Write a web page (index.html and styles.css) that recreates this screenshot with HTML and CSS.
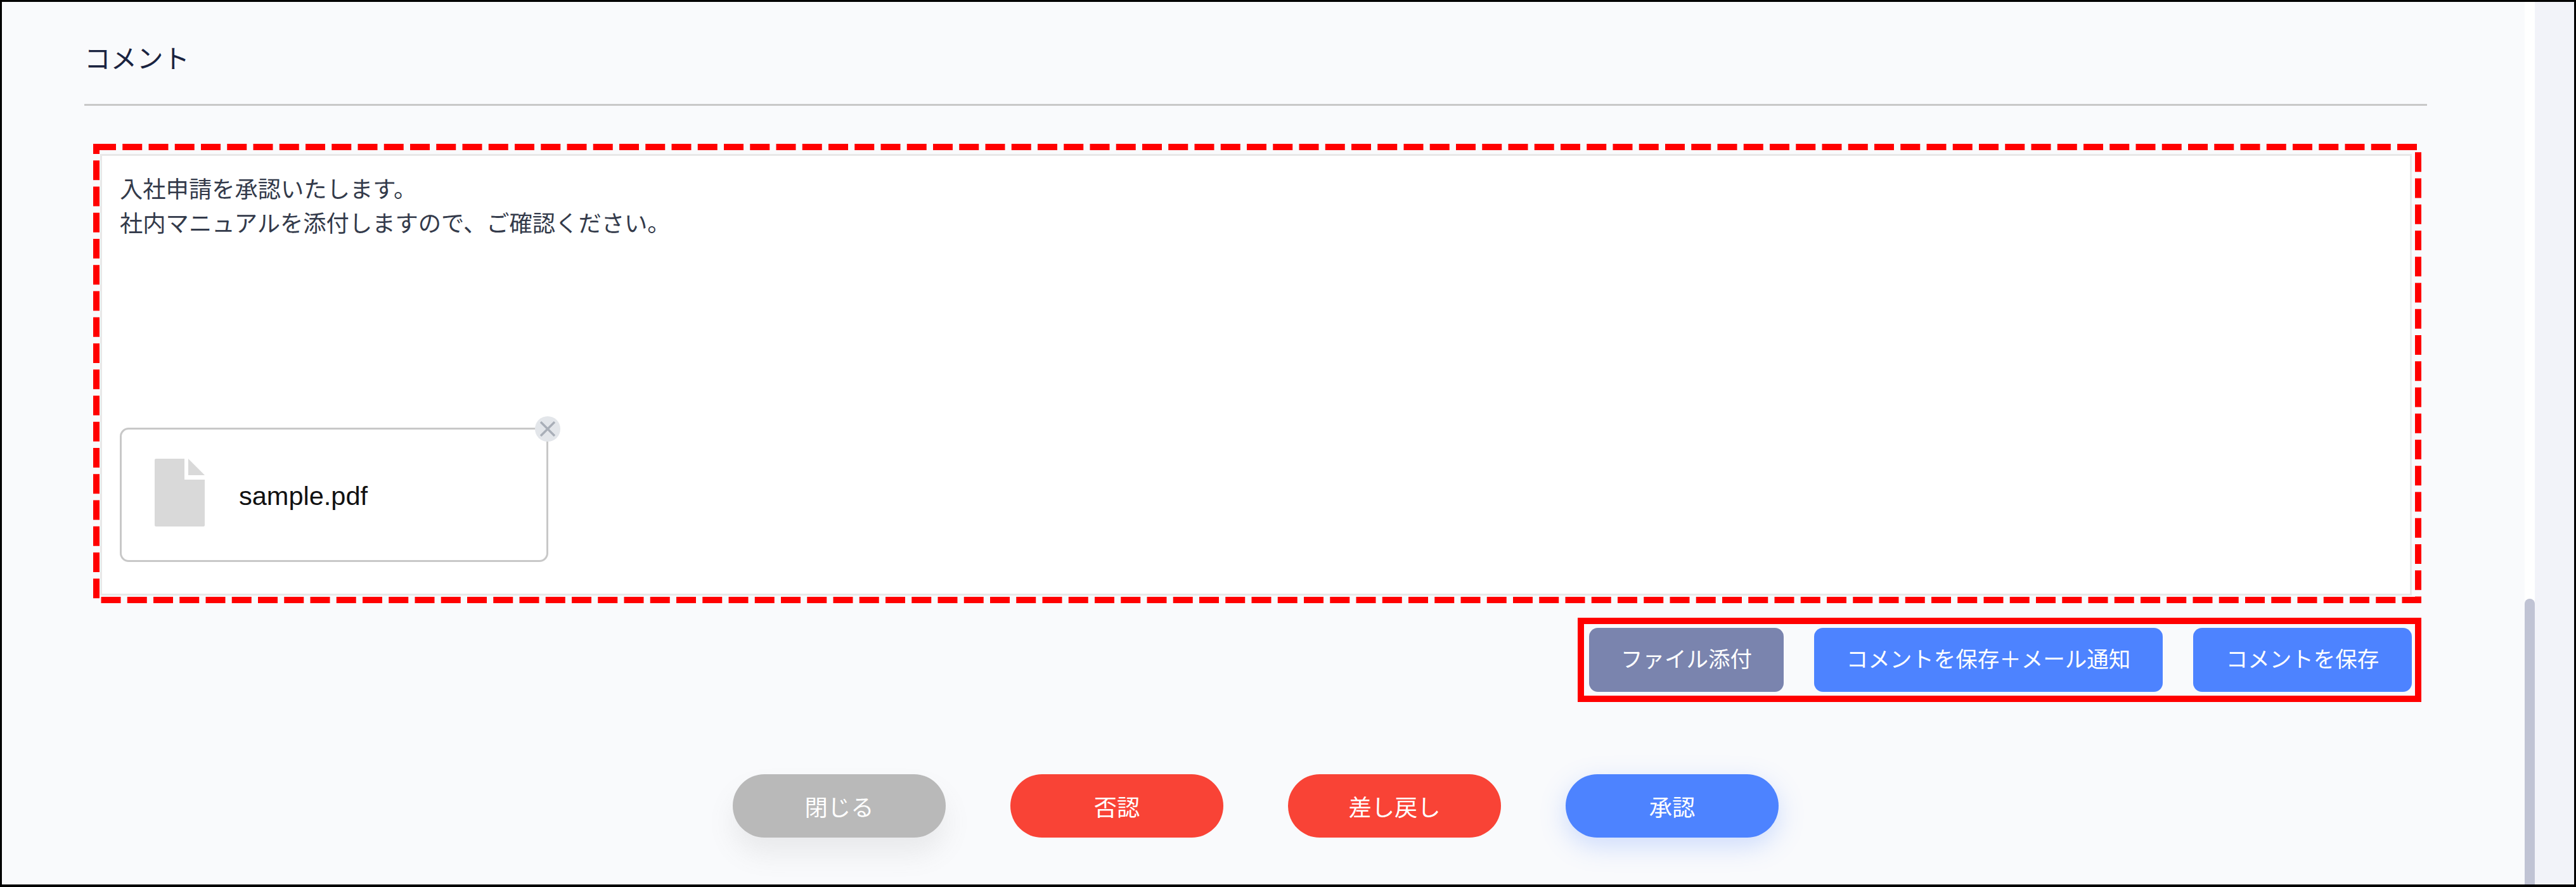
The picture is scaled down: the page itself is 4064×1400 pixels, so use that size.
FILE: index.html
```html
<!DOCTYPE html>
<html lang="ja">
<head>
    <meta charset="UTF-8">
    <title>コメント</title>
    <link rel="stylesheet" href="styles.css">
</head>
<body>
    <div class="frame">
        <main class="content">
            <h2 class="section-title">コメント</h2>

            <div class="comment-area">
                <div class="comment-box">
                    <div class="comment-text">
                        <p>入社申請を承認いたします。</p>
                        <p>社内マニュアルを添付しますので、ご確認ください。</p>
                    </div>
                    <div class="file-card">
                        <svg class="file-icon" viewBox="0 0 79 107">
                            <path d="M2 0H47V33H79V105Q79 107 77 107H2Q0 107 0 105V2Q0 0 2 0Z"/>
                            <path d="M53 0L79 26H53Z"/>
                        </svg>
                        <span class="file-name">sample.pdf</span>
                        <span class="file-remove">
                            <svg viewBox="0 0 24 24"><path d="M1 1L23 23M23 1L1 23"/></svg>
                        </span>
                    </div>
                </div>
                <!-- 赤い破線の注釈 -->
                <svg class="dash-note" viewBox="0 0 3673 725">
                    <rect x="5" y="5" width="3663" height="715"/>
                </svg>
            </div>

            <div class="tool-row">
                <div class="tool-box">
                    <button class="tool-button attach">ファイル添付</button>
                    <button class="tool-button notify">コメントを保存＋メール通知</button>
                    <button class="tool-button save">コメントを保存</button>
                </div>
            </div>

            <div class="actions">
                <button class="action-button close">閉じる</button>
                <button class="action-button reject">否認</button>
                <button class="action-button reject">差し戻し</button>
                <button class="action-button approve">承認</button>
            </div>
        </main>
        <div class="scrollbar">
            <div class="scrollbar-thumb"></div>
        </div>
        <div class="scrollbar-track"></div>
    </div>
</body>
</html>
```

FILE: styles.css
```css
* {
    box-sizing: border-box;
}
html, body {
    margin: 0;
    height: 1400px;
    overflow: hidden;
}
body {
    font-family: "Noto Sans CJK JP", "Liberation Sans", sans-serif;
    font-size: 36.3px;
    color: #333a4a;
}
.frame {
    display: flex;
    height: 1400px;
    border: 3px solid #000000;
    border-bottom-width: 4px;
    background-color: #f9fafc;
}
.content {
    flex: 1;
    padding: 0 154px 0 130px;
}
.section-title {
    margin: 0;
    height: 164px;
    padding-top: 57px;
    font-size: 41.5px;
    font-weight: 400;
    line-height: 60px;
    color: #1a2340;
    border-bottom: 3px solid #c8c8c8;
}
.comment-area {
    position: relative;
    height: 725px;
    margin: 60px 9px 0 14px;
    padding: 16px 15px 12px 11px;
}
.comment-box {
    display: flex;
    flex-direction: column;
    justify-content: space-between;
    height: 100%;
    padding: 23px 28px 50px;
    background-color: #ffffff;
    border: 3px solid #e8e8e8;
}
.comment-text p {
    margin: 0;
    line-height: 54.4px;
}
.file-card {
    position: relative;
    display: flex;
    align-items: center;
    width: 676px;
    height: 212px;
    padding-left: 52px;
    border: 3px solid #c8c8c8;
    border-radius: 14px;
}
.file-icon {
    align-self: flex-start;
    width: 79px;
    height: 107px;
    margin-top: 46px;
    fill: #d9d9d9;
}
.file-name {
    margin-left: 54px;
    padding-top: 4px;
    font-family: "Liberation Sans", Arial, sans-serif;
    font-size: 41.5px;
    color: #111111;
}
.file-remove {
    position: absolute;
    top: -21px;
    right: -22px;
    display: flex;
    justify-content: center;
    align-items: center;
    width: 40px;
    height: 40px;
    background-color: #e3e6ea;
    border-radius: 50%;
}
.file-remove svg {
    width: 24px;
    height: 24px;
    fill: none;
    stroke: #a9afb8;
    stroke-width: 3.5;
}
.dash-note {
    position: absolute;
    top: 0;
    left: 0;
    width: 3673px;
    height: 725px;
}
.dash-note rect {
    fill: none;
    stroke: #ff0000;
    stroke-width: 10;
    stroke-dasharray: 31 10.25;
}
.tool-row {
    display: flex;
    justify-content: flex-end;
    margin: 23px 9px 0 0;
}
.tool-box {
    display: flex;
    gap: 48px;
    height: 133px;
    padding: 6px 5px 6px 8px;
    border: 10px solid #ff0000;
}
.tool-button {
    height: 101px;
    padding: 0 0 8px;
    font: inherit;
    font-size: 34.5px;
    color: #ffffff;
    background-color: #4d83ff;
    border: none;
    border-radius: 14px;
}
.tool-button.attach {
    width: 307px;
    background-color: #7a84ae;
}
.tool-button.notify {
    width: 550px;
}
.tool-button.save {
    width: 345px;
}
.actions {
    display: flex;
    justify-content: center;
    gap: 102px;
    margin-top: 114px;
}
.action-button {
    width: 336px;
    height: 100px;
    font: inherit;
    color: #ffffff;
    border: none;
    border-radius: 50px;
}
.action-button.close {
    background-color: #b9b9b9;
    box-shadow: 0 26px 40px rgba(120, 120, 120, 0.12);
}
.action-button.reject {
    background-color: #f94336;
}
.action-button.approve {
    background-color: #4d83ff;
    box-shadow: 0 13px 40px rgba(77, 131, 255, 0.25);
}
.scrollbar {
    position: relative;
    width: 16px;
    background-color: #ffffff;
}
.scrollbar-thumb {
    position: absolute;
    top: 942px;
    bottom: 0;
    left: 0;
    right: 0;
    background-color: #c0c3d4;
    border-radius: 8px 8px 0 0;
}
.scrollbar-track {
    width: 62px;
    background-color: #f2f3f9;
}
```
